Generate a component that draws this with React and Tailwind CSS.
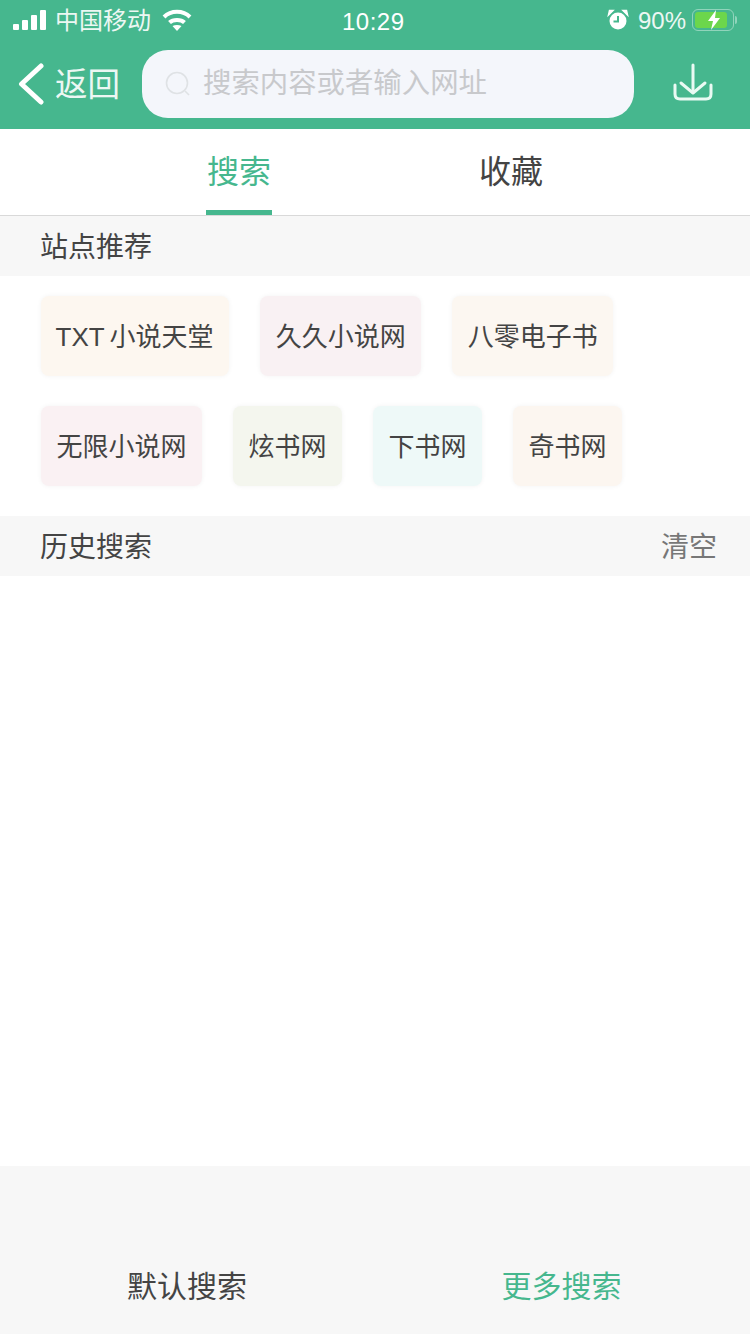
const row1 = [
  { name: '小说天堂', prefix: 'TXT', color: 'bg-[#fdf7f0]' },
  { name: '久久小说网', color: 'bg-[#f9f1f3]' },
  { name: '八零电子书', color: 'bg-[#fcf7f1]' },
];

const row2 = [
  { name: '无限小说网', color: 'bg-[#faf1f3]' },
  { name: '炫书网', color: 'bg-[#f4f6ee]' },
  { name: '下书网', color: 'bg-[#eef9f8]' },
  { name: '奇书网', color: 'bg-[#fcf6f0]' },
];

function Chip({ name, prefix, color }) {
  return (
    <div className={`h-20 px-[15.5px] pt-[2px] flex items-center rounded-lg text-[26px] text-[#444] whitespace-nowrap shadow-[0_0_5px_rgba(0,0,0,0.05)] ${color}`}>
      {prefix && <span className="-ml-[1px] mr-[5px]">{prefix}</span>}
      {name}
    </div>
  );
}

function SectionHeader({ title, action }) {
  return (
    <div className="h-[60px] bg-[#f7f7f7] pl-[40px] pr-[33px] pt-[4px] flex items-center justify-between text-[28px] text-[#444]">
      <span>{title}</span>
      {action && <span className="text-[#777]">{action}</span>}
    </div>
  );
}

function StatusBar() {
  return (
    <div className="h-10 pl-[13px] pr-[13px] relative flex items-center justify-between text-white text-[24px]">
      <div className="flex items-center">
        <div className="flex items-end gap-[3px] h-5 w-[33px]">
          <span className="w-[6px] h-[6px] bg-white rounded-[1px]"></span>
          <span className="w-[6px] h-[10px] bg-white rounded-[1px]"></span>
          <span className="w-[6px] h-[15px] bg-white rounded-[1px]"></span>
          <span className="w-[6px] h-5 bg-white rounded-[1px]"></span>
        </div>
        <span className="ml-[9px] pt-[2px] opacity-90">中国移动</span>
        <svg className="ml-[11px]" width="30" height="22" viewBox="0 0 30 22" fill="none" stroke="white" strokeWidth="4">
          <path d="M2 8 C9 1 21 1 28 8" />
          <path d="M7.5 13.5 C11 10 19 10 22.5 13.5" />
          <path d="M15 22 L10.5 17 C13 15.5 17 15.5 19.5 17 Z" fill="white" stroke="none" />
        </svg>
      </div>
      <span className="absolute left-[342px] top-0 h-10 pt-[3px] flex items-center tracking-[0.5px]">10:29</span>
      <div className="flex items-center">
        <svg width="22" height="22" viewBox="0 0 22 22" fill="white">
          <circle cx="11" cy="12" r="8.5" />
          <path d="M1.5 6 L6 1.5 L2.5 1.5 Z M20.5 6 L16 1.5 L19.5 1.5 Z" stroke="white" strokeWidth="1.5" />
          <path d="M11 7 V12.5 H6.5" fill="none" stroke="#46b78e" strokeWidth="2" />
        </svg>
        <span className="ml-[9px] pt-[2px] opacity-90">90%</span>
        <div className="ml-[6px] flex items-center">
          <div className="relative w-[42px] h-[22px] rounded-[6px] border border-white/40 p-[2px]">
            <div className="h-full w-[32px] rounded-[3px] bg-[#6cd64c]"></div>
            <svg className="absolute left-[13px] top-0" width="16" height="20" viewBox="0 0 16 20" fill="white">
              <path d="M10 0 L2 11 H7 L5 20 L14 8 H9 Z" />
            </svg>
          </div>
          <div className="ml-[1px] w-[2px] h-2 bg-white/40 rounded-r-sm"></div>
        </div>
      </div>
    </div>
  );
}

export default function App() {
  return (
    <div className="w-[750px] h-[1334px] bg-white flex flex-col overflow-hidden font-['Liberation_Sans','Noto_Sans_CJK_SC',sans-serif]">
      <div className="h-[129px] bg-[#46b78e] shrink-0">
        <StatusBar />
        <div className="flex items-center h-[68px] mt-[10px]">
          <div className="w-[142px] flex items-center text-white text-[32.5px] whitespace-nowrap pl-[18px] pb-[1px]">
            <svg width="26" height="42" viewBox="0 0 26 42" fill="none" stroke="white" strokeWidth="5" strokeLinecap="round" strokeLinejoin="round">
              <path d="M23 3 L3.5 21 L23 39" />
            </svg>
            <span className="ml-[11px] pt-[4px] opacity-90">返回</span>
          </div>
          <div className="w-[492px] h-[68px] bg-[#f4f6fb] rounded-[26px] flex items-center pl-[22px] text-[28.4px] text-[#c8c9cc]">
            <svg width="28" height="28" viewBox="0 0 28 28" fill="none" stroke="#dfe2e5" strokeWidth="1.6">
              <circle cx="13" cy="13" r="10.5" />
              <path d="M21 21 L25 25" />
            </svg>
            <span className="ml-[11px] pb-[2px]">搜索内容或者输入网址</span>
          </div>
          <div className="flex-1 flex justify-center">
            <svg className="ml-[2px] mb-[4px]" width="40" height="38" viewBox="0 0 40 38" fill="none" stroke="#eafaf3" strokeWidth="3" strokeLinecap="round" strokeLinejoin="round">
              <path d="M20 2 V29" />
              <path d="M8 20 L20 30 L32 20" />
              <path d="M2 22 V31 Q2 36 7 36 H33 Q38 36 38 31 V22" />
            </svg>
          </div>
        </div>
      </div>

      <div className="h-[87px] shrink-0 border-b border-[#d9d9d9] flex justify-center gap-[206px] text-[32px]">
        <div className="w-[66px] h-[86px] flex items-center justify-center text-[#46b78e] border-b-[5px] border-[#46b78e] pt-[4px]">搜索</div>
        <div className="w-[66px] h-[86px] flex items-center justify-center text-[#444] pb-[1px]">收藏</div>
      </div>

      <SectionHeader title="站点推荐" />
      <div className="h-[240px] shrink-0 pl-[41px] pt-5 flex flex-col gap-[30px]">
        <div className="flex gap-[31px]">
          {row1.map(s => <Chip key={s.name} {...s} />)}
        </div>
        <div className="flex gap-[31px]">
          {row2.map(s => <Chip key={s.name} {...s} />)}
        </div>
      </div>
      <SectionHeader title="历史搜索" action="清空" />

      <div className="flex-1"></div>

      <div className="h-[168px] shrink-0 bg-[#f7f7f7] flex items-end pb-[18px] text-[30px]">
        <div className="w-1/2 h-[60px] flex items-center justify-center text-[#444] pr-[1px]">默认搜索</div>
        <div className="w-1/2 h-[60px] flex items-center justify-center text-[#46b78e] pr-[2px]">更多搜索</div>
      </div>
    </div>
  );
}
